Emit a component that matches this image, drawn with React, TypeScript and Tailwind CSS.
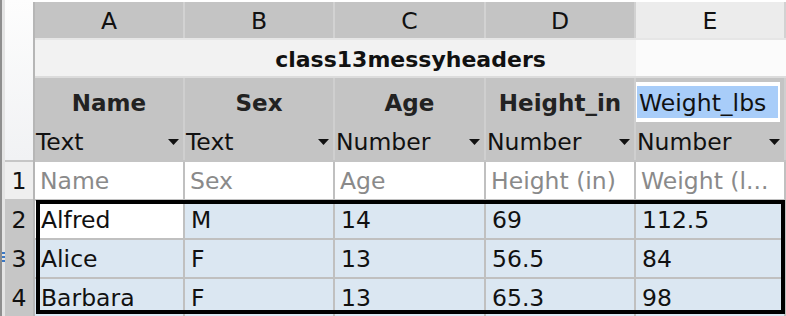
import React from "react";

const cols = ["A", "B", "C", "D", "E"];
const names = ["Name", "Sex", "Age", "Height_in", "Weight_lbs"];
const types = ["Text", "Text", "Number", "Number", "Number"];
const labels = ["Name", "Sex", "Age", "Height (in)", "Weight (l..."];
const rows = [
  ["Alfred", "M", "14", "69", "112.5"],
  ["Alice", "F", "13", "56.5", "84"],
  ["Barbara", "F", "13", "65.3", "98"],
];

const grid = "grid grid-cols-[148px_148px_149px_148px_148px] gap-x-[2px]";

function Caret() {
  return (
    <svg width="11" height="6" viewBox="0 0 11 6" className="shrink-0 mb-[3px]">
      <polygon points="0,0 11,0 5.5,6" fill="#111" />
    </svg>
  );
}

export default function App() {
  return (
    <div className="w-[786px] h-[316px] overflow-hidden bg-white flex font-['DejaVu_Sans',sans-serif] text-[23.5px] leading-none text-[#111]">
      {/* window edge */}
      <div className="w-[2px] bg-[#8e8e8e]" />
      <div className="w-[3px] bg-[#e4e4e4] flex flex-col items-start pt-[252px] gap-[2px]">
        <div className="w-[3px] h-[2px] bg-[#3b78c4]" />
        <div className="w-[3px] h-[2px] bg-[#3b78c4]" />
        <div className="w-[3px] h-[2px] bg-[#3b78c4]" />
      </div>

      {/* row headers */}
      <div className="w-[28px] flex flex-col gap-[2px] bg-[#c6c6c6]">
        <div className="h-[160px] bg-gradient-to-b from-[#fdfdfd] to-[#f1f2f4]" />
        <div className="h-[37px] pt-[3px] bg-[#efefef] flex items-center justify-center">1</div>
        {[2, 3, 4].map((n) => (
          <div key={n} className="h-[37px] pt-[3px] bg-[#c6c6c6] flex items-center justify-center">
            {n}
          </div>
        ))}
      </div>
      <div className="w-[2px] bg-[#b6b6b6] mt-[2px]" />

      {/* sheet */}
      <div className="flex-1 flex flex-col bg-[#c9c9c9]">
        <div className="h-[2px] bg-white" />
        {/* column letters */}
        <div className={`${grid} h-[36px] bg-[#d2d2d2]`}>
          {cols.map((c, i) => (
            <div
              key={c}
              className={`flex items-center justify-center pt-[4px] ${i === 4 ? "bg-[#ececec]" : "bg-[#c4c4c4]"}`}
            >
              {c}
            </div>
          ))}
        </div>
        <div className="h-[2px] bg-[#e6e6e6]" />
        {/* title */}
        <div className="h-[36px] pt-[3px] flex items-center justify-center font-bold text-[22px] bg-[linear-gradient(to_right,#f2f2f2_601px,#fbfbfb_601px)]">
          class13messyheaders
        </div>
        <div className="h-[2px] bg-[#dcdcdc]" />
        {/* names + types */}
        <div className={`${grid} h-[82px] bg-[#cfcfcf]`}>
          {names.map((n, i) => (
            <div key={n} className="bg-[#c4c4c4] flex flex-col">
              {i === 4 ? (
                <div className="h-[44px] pt-[4px] pr-[4px]">
                  <div className="h-full bg-white pt-[4px] pl-[1px] pr-[2px]">
                    <div className="h-[32px] pt-[3px] bg-[#a8cdf9] flex items-center pl-[2px]">{n}</div>
                  </div>
                </div>
              ) : (
                <div className="h-[44px] pt-[6px] flex items-center justify-center font-bold text-[23px] text-[#222]">
                  {n}
                </div>
              )}
              <div className="h-[38px] flex items-center justify-between pl-[1px] pr-[4px] pt-[4px]">
                <span>{types[i]}</span>
                <Caret />
              </div>
            </div>
          ))}
        </div>
        <div className="h-[2px] bg-[#c4c4c4]" />

        {/* data */}
        <div className="relative flex flex-col gap-[2px] bg-[#c0c0c0] pr-[2px]">
          <div className={`${grid} h-[37px]`}>
            {labels.map((l) => (
              <div key={l} className="bg-white flex items-center pt-[3px] pl-[5px] text-[#8a8a8a] whitespace-nowrap overflow-hidden">
                {l}
              </div>
            ))}
          </div>
          {rows.map((r, ri) => (
            <div key={ri} className={`${grid} h-[37px]`}>
              {r.map((v, ci) => (
                <div
                  key={ci}
                  className={`flex items-center pt-[3px] pl-[6px] ${ri === 0 && ci === 0 ? "bg-white" : "bg-[#dbe7f2]"}`}
                >
                  {v}
                </div>
              ))}
            </div>
          ))}
          {/* selection rectangle */}
          <div className="pointer-events-none absolute left-[1px] right-[1px] top-[38px] h-[114px] border-[4px] border-black" />
        </div>
      </div>
    </div>
  );
}
